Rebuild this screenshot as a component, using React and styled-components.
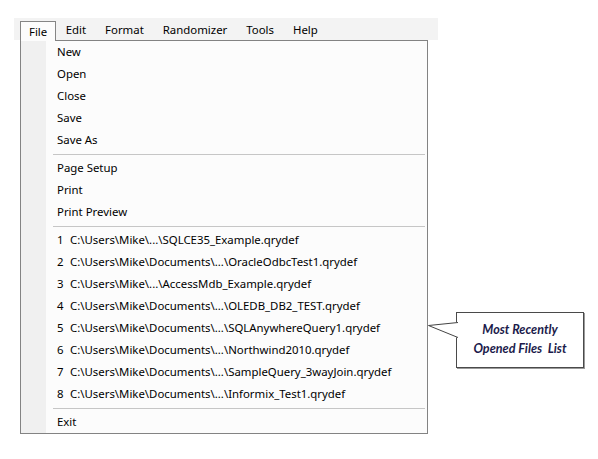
import React from "react";
import styled, { createGlobalStyle } from "styled-components";

const Global = createGlobalStyle`
  html, body { margin: 0; padding: 0; background: #ffffff; }
  body { font-family: "Noto Sans", "Open Sans", sans-serif; color: #000; }
`;

const Page = styled.div`
  position: relative;
  width: 598px;
  height: 459px;
  padding: 18px 0 0 14px;
  box-sizing: border-box;
`;

const MenuBar = styled.div`
  width: 424px;
  height: 22px;
  background: #f3f3f3;
  display: flex;
  align-items: flex-end;
`;

const MenuTitle = styled.div`
  height: ${(p) => (p.$active ? "20px" : "22px")};
  box-sizing: border-box;
  display: flex;
  align-items: center;
  font-size: 11.4px;
  padding: ${(p) => (p.$active ? "0 8px 1px 8px" : "0 9.5px 0 9.5px")};
  margin-left: ${(p) => (p.$active ? "6px" : "0")};
  margin-bottom: ${(p) => (p.$active ? "-1px" : "0")};
  border: ${(p) => (p.$active ? "1px solid #858585" : "none")};
  border-bottom: none;
  background: ${(p) => (p.$active ? "#fcfcfc" : "transparent")};
  position: relative;
  z-index: ${(p) => (p.$active ? 1 : 0)};
`;

const Dropdown = styled.div`
  margin-left: 6px;
  width: 408px;
  box-sizing: border-box;
  border: 1px solid #838383;
  background: linear-gradient(to right, #f0f0f0 0 25px, #fcfcfc 25px);
  display: flex;
  flex-direction: column;
`;

const Item = styled.div`
  height: 22px;
  display: flex;
  align-items: center;
  padding-left: 36px;
  padding-bottom: 1px;
  box-sizing: border-box;
  font-size: 11.4px;
  white-space: nowrap;
`;

const Num = styled.span`
  display: inline-block;
  width: 13px;
`;

const Separator = styled.div`
  height: 1px;
  margin: 3px 2px 2px 32px;
  background: #c6c6c6;
`;

const Callout = styled.div`
  position: absolute;
  left: 456px;
  top: 312px;
  width: 128px;
  height: 56px;
  box-sizing: border-box;
  border: 1px solid #4a4a4a;
  box-shadow: 1px 1px 0 #9a9a9a;
  background: #ffffff;
  display: flex;
  flex-direction: column;
  align-items: center;
  justify-content: center;
  padding-bottom: 2px;
  font-family: Lato, "Open Sans", sans-serif;
  font-weight: 700;
  font-style: italic;
  font-size: 12.6px;
  line-height: 19px;
  color: #1b1b4b;
`;

const Pointer = styled.svg`
  position: absolute;
  left: -30px;
  top: -1px;
  overflow: visible;
`;

const menus = ["File", "Edit", "Format", "Randomizer", "Tools", "Help"];

const groups = [
  ["New", "Open", "Close", "Save", "Save As"],
  ["Page Setup", "Print", "Print Preview"],
];

const recent = [
  "C:\\Users\\Mike\\...\\SQLCE35_Example.qrydef",
  "C:\\Users\\Mike\\Documents\\...\\OracleOdbcTest1.qrydef",
  "C:\\Users\\Mike\\...\\AccessMdb_Example.qrydef",
  "C:\\Users\\Mike\\Documents\\...\\OLEDB_DB2_TEST.qrydef",
  "C:\\Users\\Mike\\Documents\\...\\SQLAnywhereQuery1.qrydef",
  "C:\\Users\\Mike\\Documents\\...\\Northwind2010.qrydef",
  "C:\\Users\\Mike\\Documents\\...\\SampleQuery_3wayJoin.qrydef",
  "C:\\Users\\Mike\\Documents\\...\\Informix_Test1.qrydef",
];

export default function App() {
  return (
    <Page>
      <Global />
      <MenuBar>
        {menus.map((m, i) => (
          <MenuTitle key={m} $active={i === 0}>
            {m}
          </MenuTitle>
        ))}
      </MenuBar>
      <Dropdown>
        {groups.map((g, gi) => (
          <React.Fragment key={gi}>
            {g.map((t) => (
              <Item key={t}>{t}</Item>
            ))}
            <Separator />
          </React.Fragment>
        ))}
        {recent.map((p, i) => (
          <Item key={p}>
            <Num>{i + 1}</Num>
            {p}
          </Item>
        ))}
        <Separator />
        <Item>Exit</Item>
      </Dropdown>
      <Callout>
        <Pointer width="32" height="30" viewBox="0 0 32 30">
          <polygon points="1,13.5 31,10 31,26" fill="#ffffff" />
          <polyline
            points="31,10.5 1.5,13.5 31,25.5"
            fill="none"
            stroke="#444444"
            strokeWidth="1"
          />
        </Pointer>
        <span>Most Recently</span>
        <span>Opened Files&nbsp; List</span>
      </Callout>
    </Page>
  );
}
